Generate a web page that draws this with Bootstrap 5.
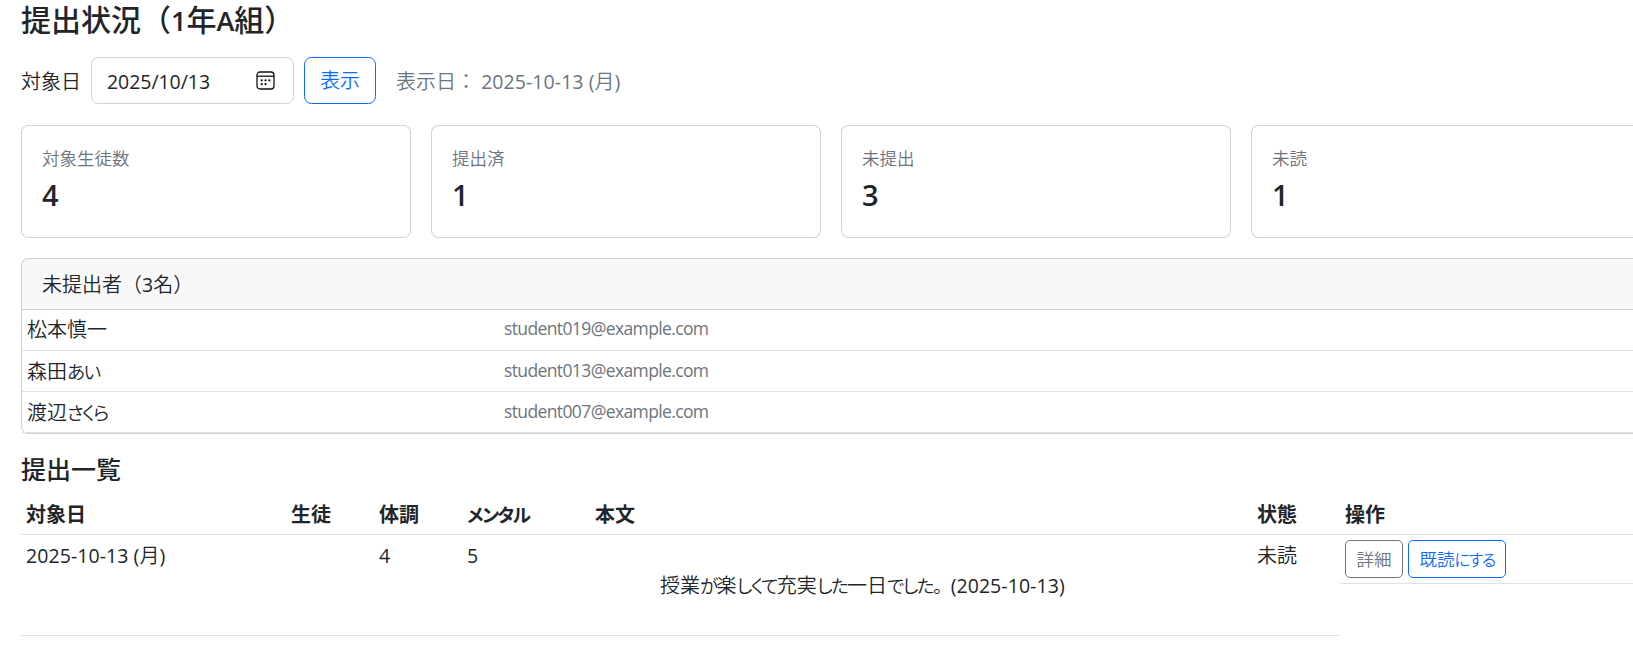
<!DOCTYPE html>
<html lang="ja">
<head>
<meta charset="utf-8">
<title>提出状況（1年A組）</title>
<link href="https://cdn.jsdelivr.net/npm/bootstrap@5.3.0/dist/css/bootstrap.min.css" rel="stylesheet">
<style>
html{font-size:20px;overflow:hidden}
body{font-family:"Open Sans","Noto Sans CJK JP",sans-serif;line-height:1.5;color:#212529;overflow:hidden;height:648px}
.page{width:1620px;margin-left:21px;padding-top:2px}
h1,h2{font-weight:500}
.page .jp{font-weight:350}
.t1{font-size:30px;height:36px}
.t1 .lat{font-weight:600;font-size:27px}
.t2{font-size:25px;height:30px}
.num{letter-spacing:-.05px;font-weight:400;font-size:19.5px}
.jp .num{letter-spacing:.07px}
.lbl{font-size:17.5px;line-height:24px;height:26px}
.big{font-size:29px;line-height:46px;height:45px;font-weight:600}
.datebox{width:203px;height:47px;border:1px solid #ced4da;padding:2px 14px 0 15px}
.muted{color:#6c757d}
.card{border-color:rgba(0,0,0,.175)}
.card-header{padding:11px 20px 9px}
.table{table-layout:fixed;--bs-table-bg:transparent}
.table>:not(caption)>*>*{height:41px;line-height:30px;padding:6px 5px 4px}
.who{margin-top:-1px}
.who td{white-space:nowrap}
.table.who td.mail{font-size:17.5px;letter-spacing:-.62px;padding:4px 6px 6px}
.list td.note{padding:36px 5px 4px 70px;white-space:nowrap}
.list tbody td{height:101px}
.table.list tbody td.ops{height:49px;padding:5px;gap:5px}
.btn-sm{font-size:17.5px;line-height:26px;height:38px;padding:5px 10.5px;border-radius:5px;white-space:nowrap}
.kana{font-feature-settings:"palt";letter-spacing:-1.6px;font-size:.93em}
.stop{margin-right:10px}
</style>
</head>
<body>
<main class="page">
  <h1 class="t1 text-nowrap">提出状況（<span class="lat">1</span>年<span class="lat">A</span>組）</h1>
  <form class="d-flex align-items-center text-nowrap mb-0" style="margin-top:19px">
    <label class="jp" style="padding-top:2px">対象日</label>
    <div class="datebox rounded d-flex align-items-center justify-content-between bg-white" style="margin-left:10px">
      <span class="num">2025/10/13</span>
      <svg width="19" height="19" viewBox="0 0 19 19" fill="none" stroke="#111" stroke-width="1.3" style="margin:0 4px 2px 0"><rect x="1" y="1" width="17" height="17" rx="3"/><path d="M1 5.2h17"/><g fill="#111" stroke="none"><circle cx="5.7" cy="9.3" r="1.1"/><circle cx="9.5" cy="9.3" r="1.1"/><circle cx="13.3" cy="9.3" r="1.1"/><circle cx="5.7" cy="13.2" r="1.1"/><circle cx="9.5" cy="13.2" r="1.1"/></g></svg>
    </div>
    <button type="button" class="btn btn-outline-primary jp" style="margin-left:10px;width:72px;height:47px;padding-top:8px">表示</button>
    <div class="muted jp" style="margin-left:20px;padding-top:2px">表示日：<span class="num">&nbsp;2025-10-13 (</span>月<span class="num">)</span></div>
  </form>
  <div class="row" style="--bs-gutter-x:20px;margin-top:21px">
    <div class="col-3"><div class="card"><div class="card-body"><div class="muted lbl jp">対象生徒数</div><div class="big">4</div></div></div></div>
    <div class="col-3"><div class="card"><div class="card-body"><div class="muted lbl jp">提出済</div><div class="big">1</div></div></div></div>
    <div class="col-3"><div class="card"><div class="card-body"><div class="muted lbl jp">未提出</div><div class="big">3</div></div></div></div>
    <div class="col-3"><div class="card"><div class="card-body"><div class="muted lbl jp">未読</div><div class="big">1</div></div></div></div>
  </div>
  <section class="card" style="margin-top:20px">
    <div class="card-header jp">未提出者（<span class="num">3</span>名）</div>
    <table class="table table-sm mb-0 who">
      <colgroup><col style="width:476px"><col></colgroup>
      <tbody>
        <tr><td class="jp">松本慎一</td><td class="muted mail">student019@example.com</td></tr>
        <tr><td class="jp">森田<span class="kana">あい</span></td><td class="muted mail">student013@example.com</td></tr>
        <tr><td class="jp">渡辺<span class="kana">さくら</span></td><td class="muted mail">student007@example.com</td></tr>
      </tbody>
    </table>
  </section>
  <h2 class="t2" style="margin:20px 0 10px">提出一覧</h2>
  <table class="table table-sm list mb-0">
    <colgroup><col style="width:265px"><col style="width:88px"><col style="width:88px"><col style="width:128px"><col style="width:662px"><col style="width:88px"><col></colgroup>
    <thead><tr><th>対象日</th><th>生徒</th><th>体調</th><th><span class="kana">メンタル</span></th><th>本文</th><th>状態</th><th>操作</th></tr></thead>
    <tbody><tr>
      <td class="jp"><span class="num">2025-10-13 (</span>月<span class="num">)</span></td><td></td><td class="num">4</td><td class="num">5</td>
      <td class="note jp">授業<span class="kana">が</span>楽<span class="kana">しくて</span>充実<span class="kana">した</span>一日<span class="kana stop">でした。</span><span class="num">(2025-10-13)</span></td>
      <td class="jp">未読</td>
      <td class="ops d-flex"><button type="button" class="btn btn-sm btn-outline-secondary jp">詳細</button><button type="button" class="btn btn-sm btn-outline-primary jp">既読<span class="kana">にする</span></button></td>
    </tr></tbody>
  </table>
</main>
<script src="https://cdn.jsdelivr.net/npm/bootstrap@5.3.0/dist/js/bootstrap.bundle.min.js"></script>
</body>
</html>
